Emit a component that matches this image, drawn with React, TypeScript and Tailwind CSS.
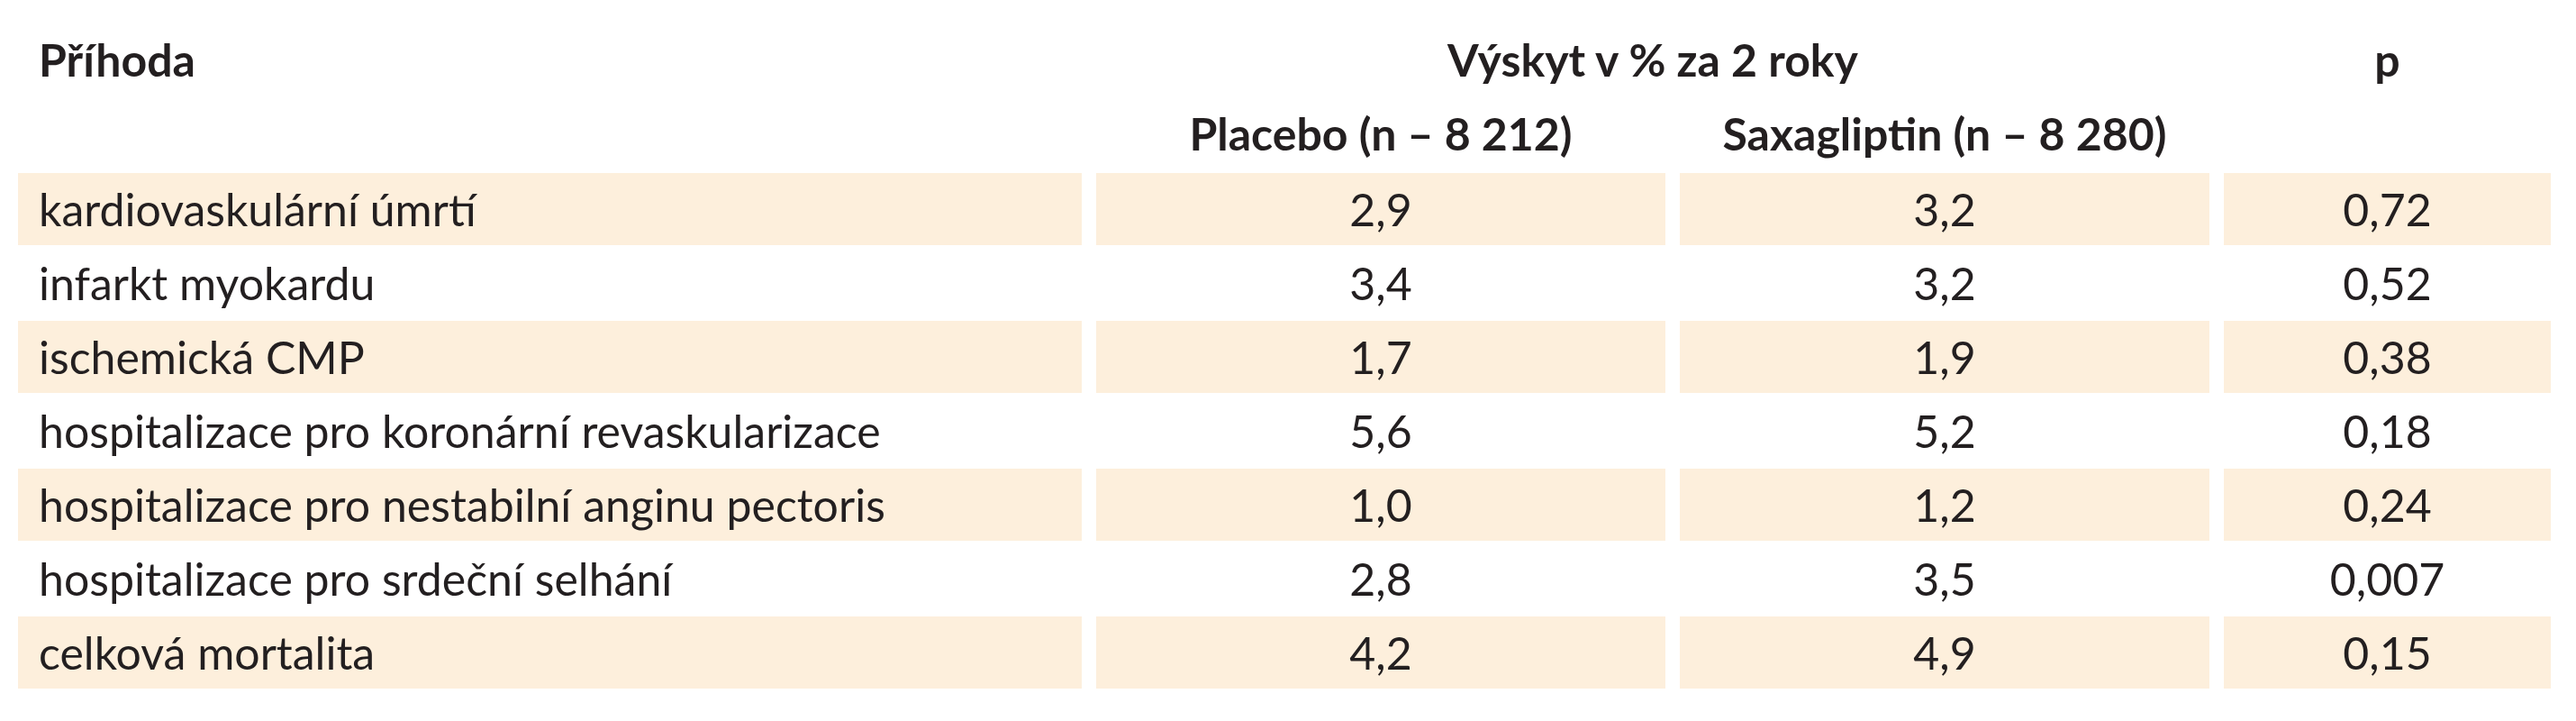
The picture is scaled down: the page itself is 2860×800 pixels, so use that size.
import React from "react";

const rows: [string, string, string, string][] = [
  ["kardiovaskulární úmrtí", "2,9", "3,2", "0,72"],
  ["infarkt myokardu", "3,4", "3,2", "0,52"],
  ["ischemická CMP", "1,7", "1,9", "0,38"],
  ["hospitalizace pro koronární revaskularizace", "5,6", "5,2", "0,18"],
  ["hospitalizace pro nestabilní anginu pectoris", "1,0", "1,2", "0,24"],
  ["hospitalizace pro srdeční selhání", "2,8", "3,5", "0,007"],
  ["celková mortalita", "4,2", "4,9", "0,15"],
];

export default function App() {
  return (
    <div
      className="w-[2860px] h-[800px] bg-white text-[#231f20] text-[50px] leading-[60px]"
      style={{ fontFamily: "Lato, 'Open Sans', sans-serif" }}
    >
      <div className="pl-[20px] pt-[36px]">
        <div className="grid grid-cols-[1181px_632px_588px_363px] gap-x-[16px] font-bold">
          <div className="pl-[23px]">Příhoda</div>
          <div className="col-span-2 text-center">Výskyt v % za 2 roky</div>
          <div className="text-center">p</div>
        </div>
        <div className="grid grid-cols-[1181px_632px_588px_363px] gap-x-[16px] font-bold mt-[22px] mb-[14px]">
          <div></div>
          <div className="text-center whitespace-nowrap">Placebo (n – 8 212)</div>
          <div className="text-center whitespace-nowrap">Saxagliptin (n – 8 280)</div>
          <div></div>
        </div>
        <div className="flex flex-col gap-y-[2px]">
          {rows.map((r, i) => {
            const bg = i % 2 === 0 ? "bg-[#fdefdc]" : "bg-white";
            return (
              <div
                key={i}
                className="grid grid-cols-[1181px_632px_588px_363px] gap-x-[16px] h-[80px]"
              >
                <div className={`${bg} flex items-center pl-[23px] whitespace-nowrap`}>{r[0]}</div>
                <div className={`${bg} flex items-center justify-center`}>{r[1]}</div>
                <div className={`${bg} flex items-center justify-center`}>{r[2]}</div>
                <div className={`${bg} flex items-center justify-center`}>{r[3]}</div>
              </div>
            );
          })}
        </div>
      </div>
    </div>
  );
}
